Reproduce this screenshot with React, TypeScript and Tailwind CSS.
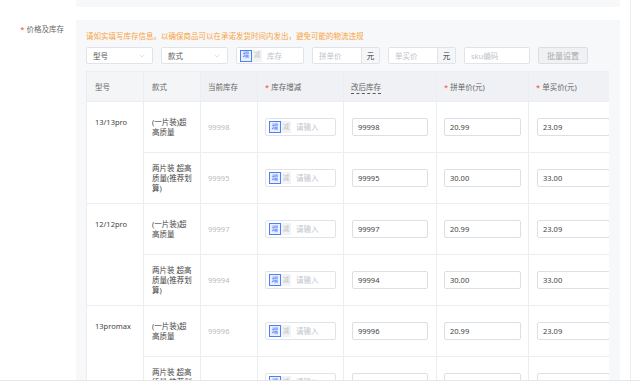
import { ChevronDown } from "lucide-react";

const groups = [
	{
		model: "13/13pro",
		items: [
			{ style: ["(一片装)超", "高质量"], stock: "99998", after: "99998", group: "20.99", single: "23.09" },
			{ style: ["两片装 超高", "质量(推荐划", "算)"], stock: "99995", after: "99995", group: "30.00", single: "33.00" },
		],
	},
	{
		model: "12/12pro",
		items: [
			{ style: ["(一片装)超", "高质量"], stock: "99997", after: "99997", group: "20.99", single: "23.09" },
			{ style: ["两片装 超高", "质量(推荐划", "算)"], stock: "99994", after: "99994", group: "30.00", single: "33.00" },
		],
	},
	{
		model: "13promax",
		items: [
			{ style: ["(一片装)超", "高质量"], stock: "99996", after: "99996", group: "20.99", single: "23.09" },
			{ style: ["两片装 超高", "质量(推荐划", "算)"], stock: "99995", after: "99995", group: "30.00", single: "33.00" },
		],
	},
];

function Select({ label }: { label: string }) {
	return (
		<div className="w-[67px] h-[17px] bg-white border border-[#e1e3e8] rounded-[2px] flex items-center justify-between pl-[6px] pr-[6px]">
			<span className="text-[#555]">{label}</span>
			<ChevronDown className="w-[8px] h-[8px] text-[#c4c7cc]" strokeWidth={1.5} />
		</div>
	);
}

function Toggle({ placeholder, h }: { placeholder: string; h: string }) {
	return (
		<div className={`flex items-center bg-white border border-[#e1e3e8] rounded-[2px] ${h}`}>
			<span className="ml-[3px] w-[12px] h-[12px] flex items-center justify-center border border-[#4d7ff5] bg-[#eaf0ff] text-[#3d6ef0] text-[6.5px] leading-none">
				增
			</span>
			<span className="w-[10px] h-[12px] flex items-center justify-center bg-[#f2f3f5] text-[#c4c4c4] text-[6.5px] leading-none">
				减
			</span>
			<span className="ml-[5px] text-[#c0c4cc]">{placeholder}</span>
		</div>
	);
}

function Addon({ placeholder }: { placeholder: string }) {
	return (
		<div className="w-[68px] h-[17px] flex border border-[#e1e3e8] rounded-[2px] bg-white">
			<span className="flex-1 flex items-center pl-[6px] text-[#c0c4cc]">{placeholder}</span>
			<span className="w-[18px] flex items-center justify-center bg-[#f5f6f8] border-l border-[#e1e3e8] text-[#333]">元</span>
		</div>
	);
}

function Field({ value }: { value: string }) {
	return (
		<div className="h-[18px] border border-[#dcdfe6] rounded-[2px] bg-white flex items-center pl-[5px] text-[#444]">
			{value}
		</div>
	);
}

function Req() {
	return <span className="text-[#f5483b] mr-[2px]">*</span>;
}

export default function App() {
	return (
		<div
			className="w-[631px] min-h-[389px] bg-white border-r border-[#ededed] text-[7.5px] leading-[10px]"
			style={{ fontFamily: '"Noto Sans", "Noto Sans CJK SC", sans-serif' }}
		>
			<div className="ml-[76px] w-[544px] h-[7px] bg-[#f7f8fa]" />

			<div className="flex mt-[13px]">
				<div className="w-[76px] flex justify-end pr-[12px] pt-[4px] text-[#666]">
					<span>
						<Req />
						价格及库存
					</span>
				</div>

				<section className="w-[544px] bg-[#f7f8fa] pl-[10px] pr-[11px] pt-[11px]">
					<p className="text-[#f7a33d]">
						请如实填写库存信息。以确保商品可以在承诺发货时间内发出，避免可能的物流违规
					</p>

					<div className="flex items-center gap-[8px] mt-[6px]">
						<Select label="型号" />
						<Select label="款式" />
						<div className="w-[68px]">
							<Toggle placeholder="库存" h="h-[17px]" />
						</div>
						<Addon placeholder="拼单价" />
						<Addon placeholder="单买价" />
						<div className="w-[66px] h-[17px] bg-white border border-[#e1e3e8] rounded-[2px] flex items-center pl-[6px] text-[#c0c4cc]">
							sku编码
						</div>
						<div className="w-[50px] h-[17px] bg-[#f0f1f3] border border-[#dcdee2] rounded-[2px] flex items-center justify-center text-[8px] text-[#aaa]">
							批量设置
						</div>
					</div>

					<div className="mt-[7px] w-[523px] overflow-hidden">
						<table className="table-fixed border-collapse w-[560px] bg-white text-left">
							<colgroup>
								<col className="w-[57px]" />
								<col className="w-[57px]" />
								<col className="w-[57px]" />
								<col className="w-[86px]" />
								<col className="w-[93px]" />
								<col className="w-[92px]" />
								<col className="w-[118px]" />
							</colgroup>
							<thead>
								<tr className="h-[30px] text-[#666]">
									<th className="font-normal px-[8px] bg-[#f4f5f7] border border-[#ebedf0]">型号</th>
									<th className="font-normal px-[8px] bg-[#f4f5f7] border border-[#ebedf0]">款式</th>
									<th className="font-normal px-[7px] bg-[#f0f1f4] border border-[#ebedf0]">当前库存</th>
									<th className="font-normal px-[7px] bg-[#f0f1f4] border border-[#ebedf0]">
										<Req />
										库存增减
									</th>
									<th className="font-normal px-[7px] bg-[#f0f1f4] border border-[#ebedf0]">
										<span className="border-b border-dashed border-[#555] pb-[1px]">改后库存</span>
									</th>
									<th className="font-normal px-[7px] bg-[#f0f1f4] border border-[#ebedf0]">
										<Req />
										拼单价(元)
									</th>
									<th className="font-normal px-[7px] bg-[#f0f1f4] border border-[#ebedf0]">
										<Req />
										单买价(元)
									</th>
								</tr>
							</thead>
							<tbody>
								{groups.map((g) =>
									g.items.map((it, i) => (
										<tr key={g.model + i} className="h-[51px]">
											{i === 0 && (
												<td rowSpan={2} className="align-top pt-[15px] px-[8px] text-[#444] border border-[#ebedf0]">
													{g.model}
												</td>
											)}
											<td className="px-[8px] text-[#444] border border-[#ebedf0] whitespace-nowrap">
												{it.style.map((line) => (
													<div key={line}>{line}</div>
												))}
											</td>
											<td className="px-[7px] text-[#bbb] border border-[#ebedf0]">{it.stock}</td>
											<td className="pl-[7px] pr-[7px] border border-[#ebedf0]">
												<Toggle placeholder="请输入" h="h-[18px]" />
											</td>
											<td className="px-[8px] border border-[#ebedf0]">
												<Field value={it.after} />
											</td>
											<td className="px-[7px] border border-[#ebedf0]">
												<Field value={it.group} />
											</td>
											<td className="pl-[8px] pr-[36px] border border-[#ebedf0]">
												<Field value={it.single} />
											</td>
										</tr>
									))
								)}
							</tbody>
						</table>
					</div>
				</section>
			</div>

			<div className="fixed left-0 right-0 bottom-0 h-[9px] bg-white border-t border-[#e6e6e6]" />
		</div>
	);
}
